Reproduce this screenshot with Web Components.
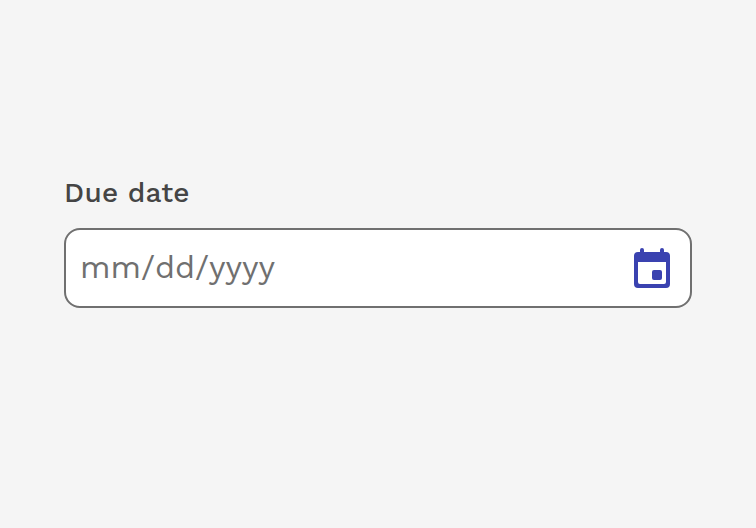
<!DOCTYPE html>
<html lang="en"><head><meta charset="utf-8"><title>Due date</title>
<style>body{margin:0;background:#f5f5f5;font-family:"Work Sans","Open Sans","Noto Sans",sans-serif}</style></head>
<body>
<date-field placeholder="mm/dd/yyyy">Due date</date-field>
<script>
customElements.define('calendar-icon', class extends HTMLElement {
  constructor(){super();this.attachShadow({mode:'open'}).innerHTML=`
<style>:host{display:block;width:36px;height:40px;color:#3a42b0}svg{display:block}</style>
<svg width="36" height="40" viewBox="0 0 36 40" fill="currentColor" aria-hidden="true">
<path fill-rule="evenodd" d="M4 4H6V2a2 2 0 0 1 4 0V4H26V2a2 2 0 0 1 4 0V4H32a4 4 0 0 1 4 4V36a4 4 0 0 1-4 4H4a4 4 0 0 1-4-4V8a4 4 0 0 1 4-4ZM4 14V34a2 2 0 0 0 2 2H30a2 2 0 0 0 2-2V14Z"/>
<rect x="18" y="22" width="10" height="10" rx="2"/></svg>`;}
});
customElements.define('date-field', class extends HTMLElement {
  constructor(){super();this.attachShadow({mode:'open'}).innerHTML=`
<style>
:host{display:block;padding:173px 64px 0}
.label{display:block;height:40px;line-height:40px;margin-bottom:15px;font-size:28px;font-weight:500;letter-spacing:.25px;color:#454545;white-space:nowrap}
.box{box-sizing:border-box;height:80px;border:2px solid #707070;border-radius:16px;background:#fff;display:flex;align-items:center;justify-content:space-between;padding:0 20px 0 14px}
.value{font-size:32px;line-height:40px;padding-bottom:2px;font-kerning:none;color:#707070;white-space:nowrap}
</style>
<span class="label"><slot></slot></span>
<div class="box"><span class="value"></span><calendar-icon></calendar-icon></div>`;
this.shadowRoot.querySelector('.value').textContent=this.getAttribute('placeholder');}
});
</script></body></html>
